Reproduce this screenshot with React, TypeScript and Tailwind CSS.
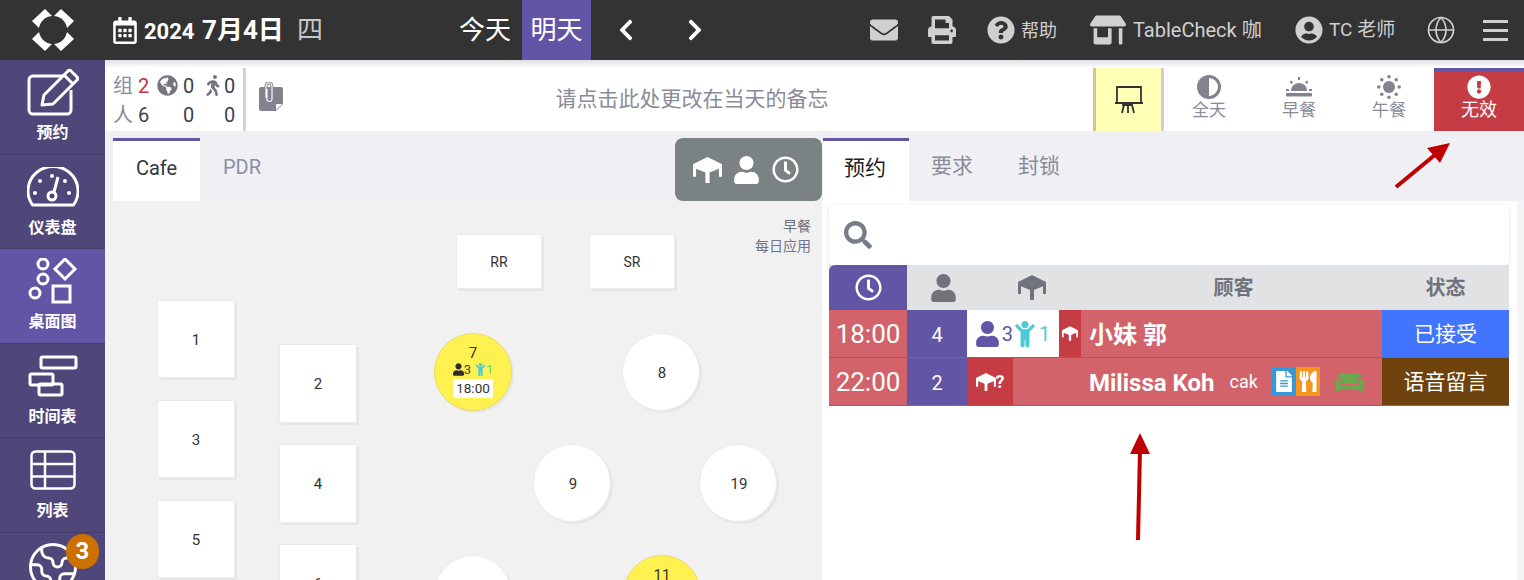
import type { ReactNode } from 'react';
import {
  FaChevronLeft,
  FaChevronRight,
  FaChild,
  FaCouch,
  FaEnvelope,
  FaExclamationCircle,
  FaFileAlt,
  FaGlobeAmericas,
  FaPrint,
  FaQuestionCircle,
  FaRegCalendarAlt,
  FaRegClock,
  FaSearch,
  FaStoreAlt,
  FaUser,
  FaUserCircle,
  FaUtensils,
  FaWalking,
} from 'react-icons/fa';
import { Earth, Globe } from 'lucide-react';

const TableIcon = ({ className }: { className?: string }) => (
  <svg viewBox="0 0 28 25" className={className} fill="currentColor">
    <path d="M14 0l14 7v3L16 15h-4L0 10V7z" />
    <path d="M0 8h3v11H0zM25 8h3v11h-3zM12 12h4v13h-4z" />
  </svg>
);

const Logo = () => (
  <svg viewBox="0 0 42 42" className="w-[42px] h-[42px]">
    <g fill="#fff">
      <path d="M0 12L13 0l7 7L7 19z" />
      <path d="M42 12L29 0l-7 7 13 12z" />
      <path d="M0 30l13 12 7-7L7 23z" />
      <path d="M42 30L29 42l-7-7 13-12z" />
    </g>
    <circle cx="21" cy="21" r="14" fill="#333" />
  </svg>
);

const EditIcon = () => (
  <svg viewBox="0 0 52 48" className="w-[52px] h-[48px]" fill="none" stroke="#fff" strokeWidth="3">
    <path d="M36 8H6a4 4 0 0 0-4 4v30a4 4 0 0 0 4 4h34a4 4 0 0 0 4-4V22" />
    <path d="M15 37l2-10L41 3a2 2 0 0 1 3 0l6 6a2 2 0 0 1 0 3L26 36z" strokeLinejoin="round" />
    <path d="M37 7l9 9" />
  </svg>
);

const GaugeIcon = () => (
  <svg viewBox="0 0 52 40" className="w-[52px] h-[40px]" fill="none" stroke="#fff" strokeWidth="3">
    <path d="M5.500 38A25 24.500 0 1 1 46.500 38z" strokeLinejoin="round" />
    <circle cx="25" cy="29" r="4" />
    <path d="M27 25l4-15" />
    <g fill="#fff" stroke="none">
      <circle cx="8" cy="26" r="2" />
      <circle cx="13" cy="14" r="2" />
      <circle cx="25" cy="9" r="2" />
      <circle cx="38" cy="14" r="2" />
      <circle cx="42" cy="26" r="2" />
    </g>
  </svg>
);

const ShapesIcon = () => (
  <svg viewBox="0 0 50 46" className="w-[50px] h-[46px]" fill="none" stroke="#fff" strokeWidth="3">
    <circle cx="15" cy="6" r="5" />
    <circle cx="15" cy="21" r="5" />
    <circle cx="7" cy="35" r="5" />
    <path d="M37 1l10 10-10 10-10-10z" />
    <rect x="25" y="28" width="17" height="16" />
  </svg>
);

const TimelineIcon = () => (
  <svg viewBox="0 0 50 42" className="w-[50px] h-[42px]" fill="none" stroke="#fff" strokeWidth="3">
    <rect x="13" y="2" width="35" height="11" rx="1.500" />
    <rect x="2" y="19" width="23" height="11" rx="1.500" />
    <rect x="11" y="29" width="23" height="11" rx="1.500" />
  </svg>
);

const GridIcon = () => (
  <svg viewBox="0 0 46 40" className="w-[46px] h-[40px]" fill="none" stroke="#fff" strokeWidth="2.500">
    <rect x="1.500" y="1.500" width="43" height="37" rx="4" />
    <path d="M1.500 14h43M1.500 26.500h43M15 1.500v37" />
  </svg>
);

const NavItem = ({ icon, label, active }: { icon: ReactNode; label: string; active?: boolean }) => (
  <div
    className={`h-[94.500px] shrink-0 flex flex-col items-center border-b border-[#443b6b] ${
      active ? 'bg-[#6255a5]' : ''
    }`}
  >
    <div className="h-[60px] pt-1 flex items-center justify-center">{icon}</div>
    <div className="pt-px text-[16px] leading-6 font-bold text-white">{label}</div>
  </div>
);

const Stat = ({ children, className = '' }: { children: ReactNode; className?: string }) => (
  <div className={`flex items-center text-[20px] leading-none text-[#3d4150] ${className}`}>{children}</div>
);

const ServiceButton = ({ icon, label }: { icon: ReactNode; label: string }) => (
  <div className="w-[90px] flex flex-col items-center pt-[6px] text-[#8a8b98]">
    <div className="h-[25px] flex items-center">{icon}</div>
    <div className="mt-[3px] text-[17px] leading-[16px]">{label}</div>
  </div>
);

const squares = [
  { id: 'RR', x: 351, y: 33, w: 86, h: 55, size: 'text-[14px]' },
  { id: 'SR', x: 484, y: 33, w: 86, h: 55, size: 'text-[14px]' },
  { id: '1', x: 52, y: 99, w: 78, h: 78, size: 'text-[15px]' },
  { id: '3', x: 52, y: 199, w: 78, h: 78, size: 'text-[15px]' },
  { id: '5', x: 52, y: 299, w: 78, h: 78, size: 'text-[15px]' },
  { id: '2', x: 174, y: 143, w: 78, h: 79, size: 'text-[15px]' },
  { id: '4', x: 174, y: 243, w: 78, h: 79, size: 'text-[15px]' },
  { id: '6', x: 174, y: 343, w: 78, h: 79, size: 'text-[15px]' },
];

const circles = [
  { id: '8', x: 517, y: 132 },
  { id: '9', x: 428, y: 243 },
  { id: '19', x: 594, y: 243 },
  { id: '', x: 329, y: 354 },
];

export default function App() {
  return (
    <div className="w-full h-screen overflow-hidden relative flex flex-col bg-white font-['Roboto','Noto_Sans_CJK_SC',sans-serif]">
      {/* top bar */}
      <header className="h-[60px] shrink-0 bg-[#333333] flex items-center">
        <div className="w-[105px] flex justify-center">
          <Logo />
        </div>
        <FaRegCalendarAlt className="ml-2 text-white w-[24px] h-[27px]" />
        <span className="ml-[7px] mt-[3px] w-[50px] text-[22px] font-bold text-white">2024</span>
        <span className="ml-2 w-[84px] text-[26px] font-bold text-white whitespace-nowrap">7月4日</span>
        <span className="ml-[11px] text-[26px] text-[#c8c8c8]">四</span>
        <span className="ml-[136px] text-[26px] text-white w-[63px]">今天</span>
        <div className="h-full w-[69px] bg-[#6255a5] flex items-center justify-center text-[26px] text-white">明天</div>
        <FaChevronLeft className="ml-[27px] text-white w-[16px] h-[24px]" />
        <FaChevronRight className="ml-[53px] text-white w-[16px] h-[24px]" />
        <FaEnvelope className="ml-[167px] text-[#d0d0d0] w-[28px] h-[28px]" />
        <FaPrint className="ml-[30px] text-[#d0d0d0] w-[28px] h-[28px]" />
        <FaQuestionCircle className="ml-[31px] text-[#d0d0d0] w-[28px] h-[28px]" />
        <span className="ml-[6px] text-[18px] text-[#d0d0d0] w-[40px]">帮助</span>
        <FaStoreAlt className="ml-[29px] text-[#d0d0d0] w-[36px] h-[30px]" />
        <span className="ml-[7px] text-[20px] text-[#d0d0d0] w-[133px] whitespace-nowrap">TableCheck 咖</span>
        <FaUserCircle className="ml-[29px] text-[#d0d0d0] w-[28px] h-[28px]" />
        <span className="ml-[6px] text-[19px] text-[#d0d0d0] w-[68px] whitespace-nowrap">TC 老师</span>
        <Globe className="ml-[29px] text-[#d0d0d0] w-[30px] h-[30px]" strokeWidth={1.300} />
        <div className="ml-[27px] w-[25px] flex flex-col gap-[6px]">
          <div className="h-[3px] bg-[#d0d0d0]" />
          <div className="h-[3px] bg-[#d0d0d0]" />
          <div className="h-[3px] bg-[#d0d0d0]" />
        </div>
      </header>

      <div className="flex-1 flex min-h-0">
        {/* side nav */}
        <nav className="w-[105px] shrink-0 bg-[#4f4679] flex flex-col overflow-hidden relative">
          <NavItem icon={<EditIcon />} label="预约" />
          <NavItem icon={<GaugeIcon />} label="仪表盘" />
          <NavItem icon={<ShapesIcon />} label="桌面图" active />
          <NavItem icon={<TimelineIcon />} label="时间表" />
          <NavItem icon={<GridIcon />} label="列表" />
          <div className="relative h-[60px] shrink-0 flex justify-center pt-[7px]">
            <Earth className="text-white w-[54px] h-[54px]" strokeWidth={1.300} />
            <div className="absolute left-[66px] top-[1px] w-[33px] h-[35px] rounded-full bg-[#cc7000] flex items-center justify-center text-[24px] font-bold text-white">
              3
            </div>
          </div>
        </nav>

        <main className="flex-1 min-w-0 flex flex-col bg-[#f0f0f4]">
          <div className="h-[8px] shrink-0 bg-gradient-to-b from-[#dfdfe3] to-white" />

          {/* info row */}
          <div className="h-[63px] shrink-0 bg-white flex">
            <div className="w-[138px] pl-2 pt-[3px] grid grid-cols-[25px_19px_26px_22px_19px_19px] grid-rows-[29px_29px]">
              <Stat className="text-[#8a8b98]">组</Stat>
              <Stat className="text-[#c9333b]">2</Stat>
              <Stat className="text-[#75757f]">
                <FaGlobeAmericas className="w-[21px] h-[21px]" />
              </Stat>
              <Stat>0</Stat>
              <Stat className="text-[#75757f]">
                <FaWalking className="w-[16px] h-[21px]" />
              </Stat>
              <Stat>0</Stat>
              <Stat className="text-[#8a8b98]">人</Stat>
              <Stat>6</Stat>
              <div />
              <Stat>0</Stat>
              <div />
              <Stat>0</Stat>
            </div>
            <div className="w-[3px] bg-[#d2d2d8]" />
            <div className="flex-1 relative flex items-center justify-center pl-[45px]">
              <svg viewBox="0 0 24 29" className="absolute left-[13px] top-[14px] w-[24px] h-[29px]">
                <path d="M2 5h20a2 2 0 0 1 2 2v15l-7 7H2a2 2 0 0 1-2-2V7a2 2 0 0 1 2-2z" fill="#83838f" />
                <path d="M17 28v-5a1 1 0 0 1 1-1h5z" fill="#fff" />
                <path d="M7 16V4a3 3 0 0 1 6 0v13a2.500 2.500 0 0 1-5 0V7" fill="none" stroke="#83838f" strokeWidth="3" />
                <path d="M7 16V4a3 3 0 0 1 6 0v13a2.500 2.500 0 0 1-5 0V7" fill="none" stroke="#fff" strokeWidth="1.100" />
              </svg>
              <span className="text-[21px] text-[#8a8b98]">请点击此处更改在当天的备忘</span>
            </div>
            <div className="w-[71px] bg-[#ffffb5] border-l-[3px] border-r-[3px] border-l-[#cccc88] border-r-[#cfcfcf] flex items-center justify-center">
              <svg viewBox="0 0 28 29" className="w-[28px] h-[29px]" fill="none" stroke="#333" strokeWidth="1.800">
                <path d="M2 18V2h24v16M0 18h28" />
                <path d="M8 18h9v2H8zM9 20l-2 8M13 20v8M17 20l2 8" />
              </svg>
            </div>
            <ServiceButton
              label="全天"
              icon={
                <svg viewBox="0 0 24 24" className="w-[24px] h-[24px]">
                  <circle cx="12" cy="12" r="10.500" fill="#fff" stroke="#83838f" strokeWidth="3" />
                  <path d="M12 1a11 11 0 0 0 0 22z" fill="#83838f" />
                </svg>
              }
            />
            <ServiceButton
              label="早餐"
              icon={
                <svg viewBox="0 0 26 24" className="w-[26px] h-[24px]" fill="#83838f">
                  <path d="M5 16a8 8 0 0 1 16 0z" />
                  <rect x="0" y="18" width="26" height="3.500" rx="1" />
                  <path d="M12 2h2v3h-2zM3.500 7l1.500-1.500 2 2L5.500 9zM22.500 7L21 5.500l-2 2L20.500 9zM0 14h3v2H0zM23 14h3v2h-3z" />
                </svg>
              }
            />
            <ServiceButton
              label="午餐"
              icon={
                <svg viewBox="0 0 24 24" className="w-[24px] h-[24px]" fill="#83838f">
                  <circle cx="12" cy="12" r="6" />
                  <circle cx="12" cy="1.800" r="1.800" />
                  <circle cx="12" cy="22.200" r="1.800" />
                  <circle cx="1.800" cy="12" r="1.800" />
                  <circle cx="22.200" cy="12" r="1.800" />
                  <circle cx="4.800" cy="4.800" r="1.800" />
                  <circle cx="19.200" cy="4.800" r="1.800" />
                  <circle cx="4.800" cy="19.200" r="1.800" />
                  <circle cx="19.200" cy="19.200" r="1.800" />
                </svg>
              }
            />
            <div className="w-[90px] bg-[#c53c45] border-t-[3px] border-[#6255a5] flex flex-col items-center pt-[3px] text-white">
              <div className="h-[25px] flex items-center">
                <FaExclamationCircle className="w-[24px] h-[24px]" />
              </div>
              <div className="mt-[3px] text-[18px] leading-[16px]">无效</div>
            </div>
          </div>

          <div className="flex-1 min-h-0 flex">
            {/* floor plan */}
            <section className="w-[717px] shrink-0 flex flex-col">
              <div className="h-[70px] shrink-0 pt-[7px] flex text-[20px]">
                <div className="ml-2 w-[87px] bg-white border-t-[3px] border-[#6255a5] flex items-center justify-center pb-[7px] text-[#33363f]">
                  Cafe
                </div>
                <div className="w-[76px] flex items-center justify-center pb-[5px] text-[#8a8fa3] ml-[4px]">PDR</div>
                <div className="ml-auto w-[147px] rounded-lg bg-[#7a8284] flex items-center justify-center pr-[6px] text-white">
                  <TableIcon className="w-[29px] h-[26px]" />
                  <FaUser className="ml-[12px] w-[25px] h-[28px]" />
                  <FaRegClock className="ml-[13px] w-[27px] h-[27px]" />
                </div>
              </div>
              <div className="flex-1 relative overflow-hidden bg-[#f1f1f1]">
                <div className="absolute right-[11px] top-[15px] text-right text-[14px] leading-[20px]">
                  <div className="text-[#6f6f78]">早餐</div>
                  <div className="text-[#6f7290]">每日应用</div>
                </div>
                {squares.map((t) => (
                  <div
                    key={t.id}
                    className={`absolute bg-white border border-[#ebebeb] rounded-[2px] shadow-[2px_2px_0_#e6e6e6] flex items-center justify-center pt-[2px] text-[#333] ${t.size}`}
                    style={{ left: t.x, top: t.y, width: t.w, height: t.h }}
                  >
                    {t.id}
                  </div>
                ))}
                {circles.map((t) => (
                  <div
                    key={t.id + t.x}
                    className="absolute w-[78px] h-[78px] rounded-full bg-white border border-[#ebebeb] shadow-[2px_2px_0_#e6e6e6] flex items-center justify-center pt-[3px] pl-[2px] text-[15px] text-[#333]"
                    style={{ left: t.x, top: t.y }}
                  >
                    {t.id}
                  </div>
                ))}
                {/* occupied tables */}
                <div className="absolute left-[329px] top-[132px] w-[78px] h-[78px] rounded-full bg-[#fff250] border border-[#ecdc5c] shadow-[2px_2px_0_#e6e6e6] flex flex-col items-center pt-[11px] text-[#333]">
                  <div className="text-[15px] leading-[17px]">7</div>
                  <div className="flex items-center text-[13px] leading-[14px] h-[15px]">
                    <FaUser className="w-[11px] h-[13px] text-[#2c2c2c]" />
                    <span className="text-[#4a4a20]">3</span>
                    <FaChild className="ml-1 w-[11px] h-[13px] text-[#4ccbd6]" />
                    <span className="text-[#5ed0a0]">1</span>
                  </div>
                  <div className="mt-[2px] w-[40px] h-[19px] bg-white flex items-center justify-center text-[13.500px]">18:00</div>
                </div>
                <div className="absolute left-[518px] top-[354px] w-[78px] h-[78px] rounded-full bg-[#fff250] border border-[#ecdc5c] flex justify-center pt-[11px] text-[15px] leading-[17px] text-[#333]">
                  11
                </div>
              </div>
            </section>

            {/* reservations */}
            <section className="flex-1 min-w-0 flex flex-col">
              <div className="h-[70px] shrink-0 pt-[7px] pl-px flex text-[21px]">
                <div className="w-[86px] bg-white border-t-[3px] border-[#6255a5] flex items-center justify-center pb-[5px] pr-[2px] text-[#222]">
                  预约
                </div>
                <div className="w-[86px] flex items-center justify-center pb-[5px] text-[#8a8b98]">要求</div>
                <div className="w-[88px] flex items-center justify-center pb-[5px] text-[#8a8b98]">封锁</div>
              </div>
              <div className="flex-1 flex min-h-0 bg-[#f4f4f6]">
                <div className="w-[695px] bg-white pl-[7px] pt-[4px] pr-[8px]">
                  <div className="h-[60px] rounded-sm bg-white shadow-[0_1px_4px_rgba(0,0,0,0.12)] flex items-center pl-[15px]">
                    <FaSearch className="w-[28px] h-[28px] text-[#767d87]" />
                  </div>
                  <div className="h-[45px] flex bg-[#e1e2e4] text-[20px] font-bold text-[#70737c]">
                    <div className="w-[78px] rounded-tl-md bg-[#6255a5] flex items-center justify-center">
                      <FaRegClock className="w-[27px] h-[27px] text-white" />
                    </div>
                    <div className="w-[72px] flex items-center justify-center">
                      <FaUser className="w-[25px] h-[28px]" />
                    </div>
                    <div className="w-[106px] flex items-center justify-center">
                      <TableIcon className="w-[28px] h-[25px]" />
                    </div>
                    <div className="flex-1 flex items-center justify-center">顾客</div>
                    <div className="w-[127px] flex items-center justify-center">状态</div>
                  </div>
                  <div className="h-[48px] flex bg-[#d2636a] border-b border-[#b5525a] text-white">
                    <div className="w-[78px] flex items-center justify-center pt-[2px] text-[26px]">18:00</div>
                    <div className="w-[60px] bg-[#6255a5] flex items-center justify-center pt-[2px] text-[20px]">4</div>
                    <div className="w-[92px] bg-white flex items-center justify-center">
                      <FaUser className="w-[23px] h-[26px] text-[#6255a5]" />
                      <span className="ml-[3px] text-[20px] text-[#6255a5]">3</span>
                      <FaChild className="ml-[2px] w-[20px] h-[26px] text-[#4ccbd6]" />
                      <span className="ml-[4px] text-[20px] text-[#4ccbd6]">1</span>
                    </div>
                    <div className="w-[22px] bg-[#c53c45] flex items-center justify-center">
                      <TableIcon className="w-[16px] h-[17px]" />
                    </div>
                    <div className="ml-2 flex-1 flex items-center pt-[2px] text-[24px] font-bold">小妹 郭</div>
                    <div className="w-[127px] bg-[#4175ff] flex items-center justify-center pt-[2px] text-[21px]">已接受</div>
                  </div>
                  <div className="h-[48px] flex bg-[#d2636a] border-b border-[#b5525a] text-white">
                    <div className="w-[78px] flex items-center justify-center pt-[2px] text-[26px]">22:00</div>
                    <div className="w-[60px] bg-[#6255a5] flex items-center justify-center pt-[2px] text-[20px]">2</div>
                    <div className="w-[46px] bg-[#c53c45] flex items-center justify-center text-[18px] font-bold">
                      <TableIcon className="w-[20px] h-[18px]" />?
                    </div>
                    <div className="ml-[76px] flex-1 flex items-center">
                      <span className="pt-[2px] text-[24px] leading-none font-bold">Milissa Koh</span>
                      <span className="ml-[15px] text-[18px]">cak</span>
                      <span className="ml-[14px] w-[24px] h-[29px] bg-[#3498db] flex items-center justify-center">
                        <FaFileAlt className="w-[16px] h-[21px]" />
                      </span>
                      <span className="w-[24px] h-[29px] bg-[#f7941d] flex items-center justify-center">
                        <FaUtensils className="w-[18px] h-[21px]" />
                      </span>
                      <FaCouch className="ml-[12px] w-[35px] h-[24px] text-[#6aa84f]" />
                    </div>
                    <div className="w-[127px] bg-[#6e430e] flex items-center justify-center pt-[2px] text-[21px]">语音留言</div>
                  </div>
                </div>
              </div>
            </section>
          </div>
        </main>
      </div>

      {/* annotation arrows */}
      <svg className="absolute left-[1390px] top-[138px] w-[66px] h-[54px]" viewBox="0 0 66 54">
        <path d="M6 49L46 16" stroke="#c00000" strokeWidth="4" />
        <path d="M60 5L37 10l13 15z" fill="#c00000" />
      </svg>
      <svg className="absolute left-[1125px] top-[430px] w-[30px] h-[114px]" viewBox="0 0 30 114">
        <path d="M13 110L15 20" stroke="#c00000" strokeWidth="4" />
        <path d="M15 3L5 24h20z" fill="#c00000" />
      </svg>
    </div>
  );
}
